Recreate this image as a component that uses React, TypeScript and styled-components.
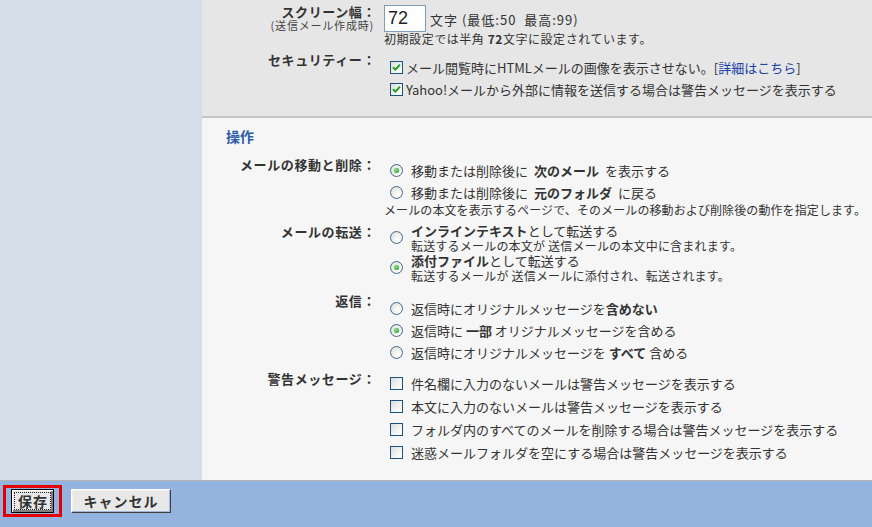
import styled, { createGlobalStyle } from 'styled-components';

const GlobalStyle = createGlobalStyle`
  body {
    margin: 0;
    font-family: 'Noto Sans CJK JP', 'Noto Sans', sans-serif;
    color: #333;
  }
`;

const Page = styled.div`
  width: 872px;
  height: 527px;
  display: flex;
  flex-direction: column;
  overflow: hidden;
`;

const Body = styled.div`
  flex: 1;
  display: flex;
  min-height: 0;
`;

const Sidebar = styled.div`
  width: 202px;
  background: #d5dde9;
`;

const Main = styled.div`
  flex: 1;
  display: flex;
  flex-direction: column;
`;

const TopPanel = styled.div`
  height: 111px;
  padding-top: 5px;
  background: #e6e6e6;
  border-bottom: 2px solid #c6c6c6;
`;

const OpsPanel = styled.div`
  flex: 1;
  background: #f6f6f6;
  padding-top: 10px;
`;

const SectionTitle = styled.h3`
  margin: 0 0 0 24px;
  font-size: 14px;
  line-height: 16px;
  font-weight: bold;
  color: #2e5ca6;
`;

const FieldRow = styled.div<{ $top?: number }>`
  display: grid;
  grid-template-columns: 174px 1fr;
  column-gap: 8px;
  margin-top: ${({ $top }) => $top ?? 0}px;
`;

const LabelCell = styled.div<{ $pad?: number }>`
  text-align: right;
  padding-top: ${({ $pad }) => $pad ?? 0}px;
`;

const FieldLabel = styled.div`
  font-size: 13px;
  line-height: 14px;
  font-weight: bold;
  letter-spacing: 0.6px;
  color: #333;
`;

const SubLabel = styled.div`
  font-size: 11px;
  line-height: 13px;
  letter-spacing: 0.8px;
  padding-right: 2px;
  color: #444;
`;

const Options = styled.div<{ $pad?: number }>`
  display: flex;
  flex-direction: column;
  padding-top: ${({ $pad }) => $pad ?? 0}px;
`;

const OptionLine = styled.div<{ $h: number; $gap?: number }>`
  height: ${({ $h }) => $h}px;
  display: flex;
  align-items: center;
  gap: ${({ $gap }) => $gap ?? 8}px;
  padding-left: 6px;
  font-size: 13px;
  white-space: nowrap;
`;

const InputLine = styled.div`
  display: flex;
  align-items: flex-start;
  gap: 4px;
`;

const WidthInput = styled.input`
  width: 42px;
  height: 27px;
  box-sizing: border-box;
  border: 1px solid #7f9db9;
  background: #fff;
  padding: 0 3px;
  font-family: 'Liberation Sans', sans-serif;
  font-size: 18px;
  color: #222;
  outline: none;
`;

const InlineText = styled.span`
  font-size: 13px;
  line-height: 14px;
  letter-spacing: 1px;
  padding-top: 8px;
  white-space: nowrap;
`;

const Note = styled.div<{ $spacing?: number }>`
  font-size: 12px;
  line-height: 14px;
  letter-spacing: ${({ $spacing }) => $spacing ?? 0}px;
  white-space: nowrap;
`;

const Strong = styled.b<{ $pad?: number }>`
  font-weight: bold;
  padding: 0 ${({ $pad }) => $pad ?? 0}px;
`;

const Link = styled.a`
  color: #1a3fa6;
  text-decoration: none;
`;

const Box = styled.span`
  flex: none;
  width: 13px;
  height: 13px;
  box-sizing: border-box;
  border: 1px solid #1c5180;
  background: linear-gradient(135deg, #dcdcd7 0%, #f4f4f1 60%, #fff 100%);
  display: flex;
  align-items: center;
  justify-content: center;
`;

const Round = styled.span<{ $on?: boolean }>`
  flex: none;
  width: 13px;
  height: 13px;
  box-sizing: border-box;
  border-radius: 50%;
  border: 1px solid #46698f;
  background: radial-gradient(circle at 65% 65%, #fff 0%, #f0f0ec 45%, #d6d6d0 100%);
  display: flex;
  align-items: center;
  justify-content: center;

  &::after {
    content: '';
    display: ${({ $on }) => ($on ? 'block' : 'none')};
    width: 5px;
    height: 5px;
    border-radius: 50%;
    background: radial-gradient(circle at 40% 40%, #9be89b 0%, #2fb22f 60%, #1d8f1d 100%);
  }
`;

const Choice = styled.div`
  display: flex;
  align-items: flex-start;
  gap: 8px;
  padding-left: 6px;
`;

const ChoiceMark = styled.div`
  padding-top: 8px;
`;

const ChoiceText = styled.div`
  display: flex;
  flex-direction: column;
`;

const ChoiceTitle = styled.div`
  font-size: 13px;
  line-height: 16px;
  white-space: nowrap;
`;

const ChoiceSub = styled.div`
  font-size: 12px;
  line-height: 14px;
  letter-spacing: 0.2px;
  white-space: nowrap;
`;

const Footer = styled.div`
  height: 42px;
  padding: 4px 0 0 3px;
  border-top: 1px solid #b4b4b4;
  background: #95b3df;
  display: flex;
  align-items: flex-start;
  gap: 9px;
`;

const Highlight = styled.div`
  border: 3px solid #e30000;
  padding: 1px 5px;
  display: flex;
`;

const Button = styled.button<{ $w: number; $default?: boolean }>`
  width: ${({ $w }) => $w}px;
  height: 24px;
  box-sizing: border-box;
  padding: 0;
  margin-top: ${({ $default }) => ($default ? 0 : 4)}px;
  font-family: 'Noto Sans CJK JP', sans-serif;
  font-size: 14px;
  font-weight: bold;
  letter-spacing: 1px;
  color: #333;
  background: #e8e8e8;
  border: 1px solid;
  border-color: ${({ $default }) => ($default ? '#000' : '#fff #404040 #404040 #fff')};
  box-shadow: ${({ $default }) =>
    $default
      ? 'inset 1px 1px #fff, inset -2px -2px #808080'
      : 'inset -1px -1px #9fb6d6, inset 1px 1px #f2f2f2'};
  display: flex;
  align-items: center;
  justify-content: center;
  cursor: pointer;
`;

const FocusRing = styled.span`
  border: 1px dotted #222;
  padding: 0 2px 0 3px;
  line-height: 16px;
`;

const Check = () => (
  <Box>
    <svg width="9" height="9" viewBox="0 0 9 9">
      <path d="M1 4.2 L3.4 6.6 L8 1.6" stroke="#21a121" strokeWidth="2" fill="none" />
    </svg>
  </Box>
);

const warnings = [
  '件名欄に入力のないメールは警告メッセージを表示する',
  '本文に入力のないメールは警告メッセージを表示する',
  'フォルダ内のすべてのメールを削除する場合は警告メッセージを表示する',
  '迷惑メールフォルダを空にする場合は警告メッセージを表示する',
];

export default function App() {
  return (
    <Page>
      <GlobalStyle />
      <Body>
        <Sidebar />
        <Main>
          <TopPanel>
            <FieldRow>
              <LabelCell>
                <FieldLabel>スクリーン幅：</FieldLabel>
                <SubLabel>(送信メール作成時)</SubLabel>
              </LabelCell>
              <div>
                <InputLine>
                  <WidthInput defaultValue="72" />
                  <InlineText>文字 (最低:50&nbsp;&nbsp;最高:99)</InlineText>
                </InputLine>
                <Note $spacing={0.55}>
                  初期設定では半角 <Strong>72</Strong>文字に設定されています。
                </Note>
              </div>
            </FieldRow>
            <FieldRow $top={7}>
              <LabelCell>
                <FieldLabel>セキュリティー：</FieldLabel>
              </LabelCell>
              <Options $pad={3}>
                <OptionLine $h={22} $gap={3}>
                  <Check />
                  <span>
                    メール閲覧時にHTMLメールの画像を表示させない。[<Link>詳細はこちら</Link>]
                  </span>
                </OptionLine>
                <OptionLine $h={22} $gap={3}>
                  <Check />
                  <span>Yahoo!メールから外部に情報を送信する場合は警告メッセージを表示する</span>
                </OptionLine>
              </Options>
            </FieldRow>
          </TopPanel>

          <OpsPanel>
            <SectionTitle>操作</SectionTitle>

            <FieldRow $top={14}>
              <LabelCell>
                <FieldLabel>メールの移動と削除：</FieldLabel>
              </LabelCell>
              <Options $pad={1}>
                <OptionLine $h={22}>
                  <Round $on />
                  <span>
                    移動または削除後に<Strong $pad={6}>次のメール</Strong>を表示する
                  </span>
                </OptionLine>
                <OptionLine $h={22}>
                  <Round />
                  <span>
                    移動または削除後に<Strong $pad={6}>元のフォルダ</Strong>に戻る
                  </span>
                </OptionLine>
                <Note $spacing={0.1}>
                  メールの本文を表示するページで、そのメールの移動および削除後の動作を指定します。
                </Note>
              </Options>
            </FieldRow>

            <FieldRow $top={6}>
              <LabelCell $pad={2}>
                <FieldLabel>メールの転送：</FieldLabel>
              </LabelCell>
              <Options>
                <Choice>
                  <ChoiceMark>
                    <Round />
                  </ChoiceMark>
                  <ChoiceText>
                    <ChoiceTitle>
                      <Strong>インラインテキスト</Strong>として転送する
                    </ChoiceTitle>
                    <ChoiceSub>転送するメールの本文が 送信メールの本文中に含まれます。</ChoiceSub>
                  </ChoiceText>
                </Choice>
                <Choice>
                  <ChoiceMark>
                    <Round $on />
                  </ChoiceMark>
                  <ChoiceText>
                    <ChoiceTitle>
                      <Strong>添付ファイル</Strong>として転送する
                    </ChoiceTitle>
                    <ChoiceSub>転送するメールが 送信メールに添付され、転送されます。</ChoiceSub>
                  </ChoiceText>
                </Choice>
              </Options>
            </FieldRow>

            <FieldRow $top={10}>
              <LabelCell $pad={1}>
                <FieldLabel>返信：</FieldLabel>
              </LabelCell>
              <Options $pad={4}>
                <OptionLine $h={22}>
                  <Round />
                  <span>
                    返信時にオリジナルメッセージを<Strong>含めない</Strong>
                  </span>
                </OptionLine>
                <OptionLine $h={22}>
                  <Round $on />
                  <span>
                    返信時に <Strong>一部</Strong> オリジナルメッセージを含める
                  </span>
                </OptionLine>
                <OptionLine $h={22}>
                  <Round />
                  <span>
                    返信時にオリジナルメッセージを <Strong>すべて</Strong> 含める
                  </span>
                </OptionLine>
              </Options>
            </FieldRow>

            <FieldRow $top={9}>
              <LabelCell>
                <FieldLabel>警告メッセージ：</FieldLabel>
              </LabelCell>
              <Options>
                {warnings.map((w) => (
                  <OptionLine key={w} $h={23}>
                    <Box />
                    <span>{w}</span>
                  </OptionLine>
                ))}
              </Options>
            </FieldRow>
          </OpsPanel>
        </Main>
      </Body>
      <Footer>
        <Highlight>
          <Button $w={43} $default>
            <FocusRing>保存</FocusRing>
          </Button>
        </Highlight>
        <Button $w={100}>キャンセル</Button>
      </Footer>
    </Page>
  );
}
